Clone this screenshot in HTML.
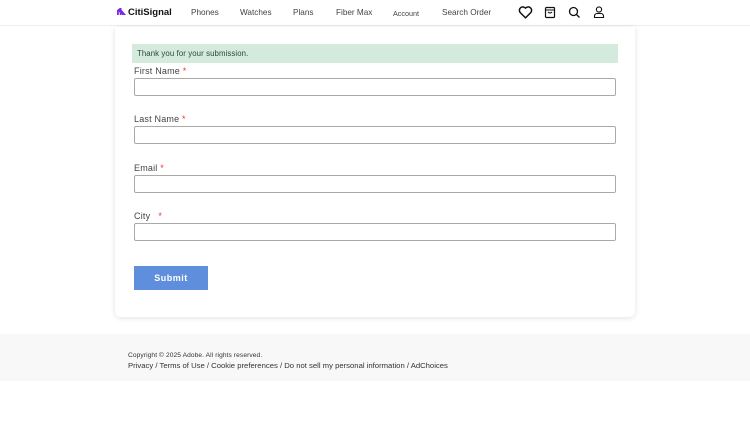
<!DOCTYPE html>
<html><head><meta charset="utf-8"><style>
*{box-sizing:border-box;margin:0;padding:0}
body{width:750px;height:431px;background:#fff;font-family:"Liberation Sans",Arial,sans-serif;position:relative;overflow:hidden;color:#333}
.hdr{position:absolute;left:0;top:0;width:750px;height:26px;border-bottom:1px solid #eee;background:#fff}
.hdr span{position:absolute;top:8px;font-size:8.2px;color:#444}
.logo{position:absolute;left:117px;top:7px;font-size:9.5px;font-weight:bold;color:#111}
.logo i{display:inline-block;width:9px;height:7px;background:#7b2be0;margin-right:2px;vertical-align:-0px;clip-path:polygon(0 30%,20% 30%,20% 100%,0 100%,0 30%,30% 0,50% 0,50% 100%,30% 100%,30% 0,60% 40%,100% 100%,60% 100%)}
.ic{position:absolute;top:5px}
.card{position:absolute;left:115px;top:27px;width:520px;height:290px;background:#fff;border-radius:0 0 6px 6px;box-shadow:0 1px 6px rgba(0,0,0,.12)}
.msg{position:absolute;left:17px;top:17px;width:486px;height:19px;background:#d3eadc;font-size:7.8px;color:#2a4a38;padding:5px 0 0 5px;letter-spacing:.1px}
.lbl{position:absolute;left:19px;font-size:9px;color:#444;letter-spacing:.2px}
.lbl b{color:#e33;font-weight:normal}
.inp{position:absolute;left:19px;width:482px;height:18px;border:1px solid #aaa;border-radius:2px}
.btn{position:absolute;left:19px;top:239px;width:74px;height:24px;background:#5f8fdc;color:#fff;font-size:9px;font-weight:bold;text-align:center;line-height:24px;letter-spacing:.5px}
.ftr{position:absolute;left:0;top:334px;width:750px;height:47px;background:#f8f8f8}
.ftr p{position:absolute;left:128px;color:#333}
</style></head><body>
<div class="hdr">
<div class="logo"><i></i>CitiSignal</div>
<span style="left:191px">Phones</span>
<span style="left:240px">Watches</span>
<span style="left:293px">Plans</span>
<span style="left:336px">Fiber Max</span>
<span style="left:393px;font-size:7.2px;top:9px">Account</span>
<span style="left:442px">Search Order</span>
<svg class="ic" style="left:518px" width="15" height="15" viewBox="0 0 14 14"><path d="M7 12 L2 7 A3 3 0 0 1 7 3 A3 3 0 0 1 12 7 Z" fill="none" stroke="#111" stroke-width="1.4" stroke-linejoin="round"/></svg>
<svg class="ic" style="left:544px" width="12" height="14" viewBox="0 0 12 14"><rect x="1.5" y="2.5" width="9" height="10" rx="1" fill="none" stroke="#111" stroke-width="1.2"/><path d="M1.5 5h9M4 7q2 2 4 0" fill="none" stroke="#111" stroke-width="1.1"/></svg>
<svg class="ic" style="left:568px" width="13" height="14" viewBox="0 0 13 14"><circle cx="5.5" cy="6.5" r="4" fill="none" stroke="#111" stroke-width="1.3"/><path d="M8.5 9.5l3 3" stroke="#111" stroke-width="1.3"/></svg>
<svg class="ic" style="left:593px" width="12" height="14" viewBox="0 0 12 14"><circle cx="6" cy="4.5" r="2.6" fill="none" stroke="#111" stroke-width="1.1"/><path d="M1.5 12.5v-1.5a2.5 2.5 0 0 1 2.5-2.5h4a2.5 2.5 0 0 1 2.5 2.5v1.5z" fill="none" stroke="#111" stroke-width="1.1"/></svg>
</div>
<div class="card">
<div class="msg">Thank you for your submission.</div>
<div class="lbl" style="top:39px">First Name <b>*</b></div>
<div class="inp" style="top:51px"></div>
<div class="lbl" style="top:87px">Last Name <b>*</b></div>
<div class="inp" style="top:99px"></div>
<div class="lbl" style="top:136px">Email <b>*</b></div>
<div class="inp" style="top:148px"></div>
<div class="lbl" style="top:184px">City &nbsp;&nbsp;<b>*</b></div>
<div class="inp" style="top:196px"></div>
<div class="btn">Submit</div>
</div>
<div class="ftr">
<p style="top:18px;font-size:6.6px;letter-spacing:.1px">Copyright © 2025 Adobe. All rights reserved.</p>
<p style="top:27px;font-size:7.7px">Privacy / Terms of Use / Cookie preferences / Do not sell my personal information / AdChoices</p>
</div>
</body></html>
